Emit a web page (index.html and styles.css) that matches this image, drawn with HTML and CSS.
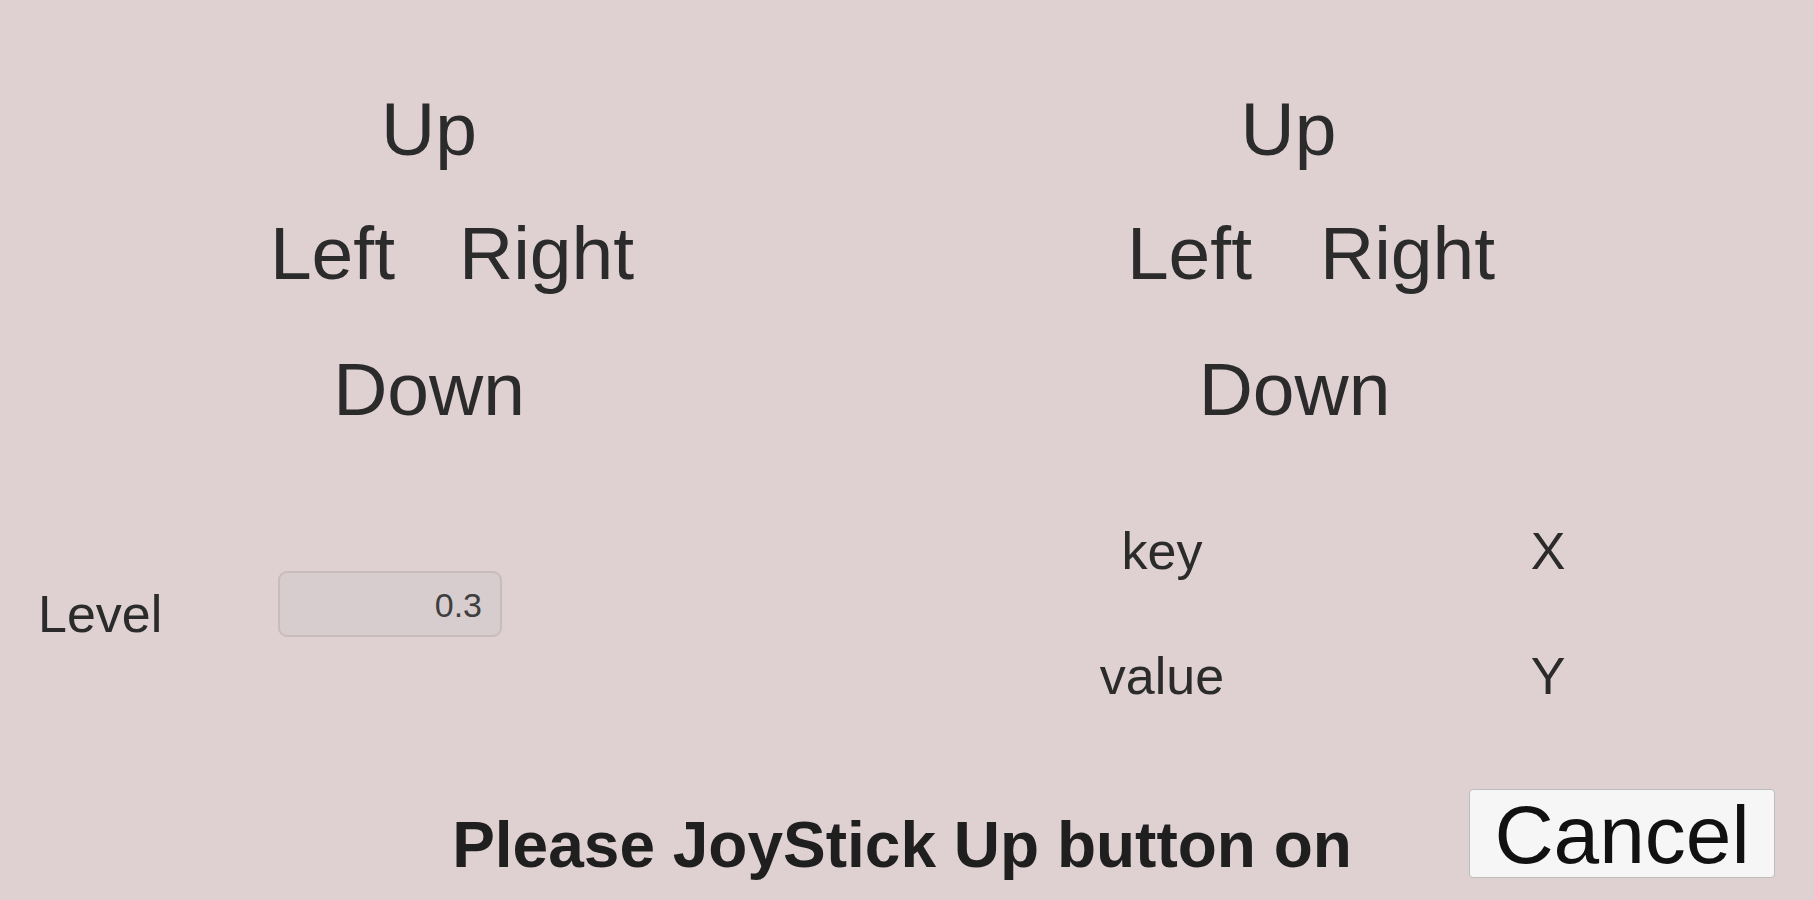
FILE: index.html
```html
<!DOCTYPE html>
<html lang="en">
<head>
<meta charset="utf-8">
<title>JoyStick Setup</title>
<link rel="stylesheet" href="styles.css">
</head>
<body>
<main class="screen">
  <section class="pads">
    <div class="pad pad-left">
      <span class="dir dir-up">Up</span>
      <span class="dir dir-left">Left</span>
      <span class="dir dir-right">Right</span>
      <span class="dir dir-down">Down</span>
    </div>
    <div class="pad pad-right">
      <span class="dir dir-up">Up</span>
      <span class="dir dir-left">Left</span>
      <span class="dir dir-right">Right</span>
      <span class="dir dir-down">Down</span>
    </div>
  </section>
  <section class="settings">
    <div class="level">
      <span class="level-label">Level</span>
      <div class="field">0.3</div>
    </div>
    <div class="kv">
      <span class="kv-cell">key</span>
      <span class="kv-cell">X</span>
      <span class="kv-cell">value</span>
      <span class="kv-cell">Y</span>
    </div>
  </section>
  <footer class="bottom">
    <p class="prompt">Please JoyStick Up button on</p>
    <button class="cancel" type="button">Cancel</button>
  </footer>
</main>
</body>
</html>
```

FILE: styles.css
```css
html, body {
  margin: 0;
  padding: 0;
}

body {
  background: #dfd0d2;
  font-family: "Liberation Sans", Arial, sans-serif;
  color: #2b2b2b;
  width: 1814px;
  height: 900px;
  overflow: hidden;
}

.screen {
  display: flex;
  flex-direction: column;
}

/* Direction pads */
.pads {
  display: flex;
  padding-top: 86px;
  padding-left: 177px;
  gap: 359px;
}

.pad {
  width: 500px;
  display: grid;
  grid-template-columns: minmax(0, 1fr) minmax(0, 1fr);
  column-gap: 64px;
  row-gap: 38px;
}

.pad-right {
  column-gap: 68px;
}

.dir {
  font-size: 75px;
  line-height: 86px;
  white-space: nowrap;
}

.dir-up,
.dir-down {
  grid-column: 1 / -1;
  justify-self: center;
  padding-left: 4px;
}

.dir-down {
  margin-top: 12px;
}

.pad-right .dir-up {
  padding-left: 5px;
}

.pad-right .dir-down {
  padding-left: 17px;
}

.dir-left {
  justify-self: end;
}

.dir-right {
  justify-self: start;
}

/* Settings */
.settings {
  display: flex;
  align-items: flex-start;
  margin-top: 89px;
}

.level {
  display: flex;
  align-items: flex-start;
  margin-top: 50px;
  padding-left: 38px;
}

.level-label {
  width: 240px;
  font-size: 52px;
  line-height: 60px;
  margin-top: 13px;
}

.field {
  box-sizing: border-box;
  width: 224px;
  height: 66px;
  padding: 2px 18px 0 0;
  background: #d7cdce;
  border: 2px solid #c9bcbe;
  border-radius: 9px;
  text-align: right;
  font-size: 34px;
  line-height: 60px;
  color: #3e3e3e;
}

.kv {
  display: grid;
  grid-template-columns: 200px 200px;
  column-gap: 186px;
  row-gap: 65px;
  margin-left: 560px;
}

.kv-cell {
  text-align: center;
  font-size: 52px;
  line-height: 60px;
}

/* Bottom bar */
.bottom {
  display: grid;
  grid-template-columns: 1fr auto 1fr;
  align-items: start;
  margin-top: 83px;
}

.prompt {
  grid-column: 2;
  margin: 20px 0 0 0;
  padding-right: 10px;
  font-size: 64px;
  line-height: 72px;
  font-weight: bold;
  color: #1f1f1f;
  white-space: nowrap;
}

.cancel {
  grid-column: 3;
  justify-self: end;
  margin-right: 39px;
  box-sizing: border-box;
  width: 306px;
  height: 89px;
  padding: 2px 0 0 0;
  background: #f6f6f6;
  border: 1px solid #bdbdbd;
  border-radius: 4px;
  font-family: "Liberation Sans", Arial, sans-serif;
  font-size: 82px;
  line-height: 85px;
  color: #111111;
  text-align: center;
}
```
